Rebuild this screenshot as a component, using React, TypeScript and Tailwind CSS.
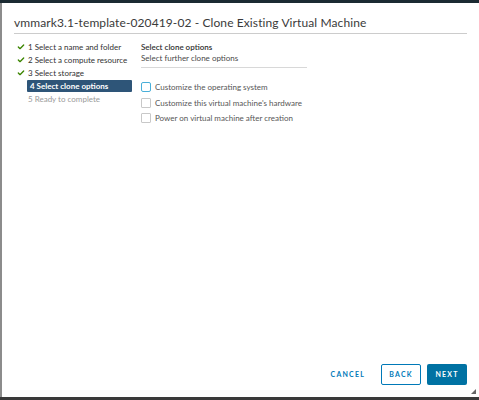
import { Check } from "lucide-react";

const steps = [
  { label: "1 Select a name and folder", done: true },
  { label: "2 Select a compute resource", done: true },
  { label: "3 Select storage", done: true },
  { label: "4 Select clone options", active: true },
  { label: "5 Ready to complete", pending: true },
];

const options = [
  "Customize the operating system",
  "Customize this virtual machine's hardware",
  "Power on virtual machine after creation",
];

export default function App() {
  return (
    <div
      className="h-[400px] w-[479px] overflow-hidden bg-[#1b2a32] pt-[3px]"
      style={{ fontFamily: "Lato, 'Open Sans', sans-serif" }}
    >
      <div className="relative flex h-[394px] flex-col border-l-2 border-[#8c8c8c] bg-white">
        <div className="mx-[12px] mt-[12px] border-b border-[#cccccc] pb-[2px]">
          <h1 className="text-[12px] leading-[16px] tracking-[0.1px] text-[#3a3a3a]">
            vmmark3.1-template-020419-02 - Clone Existing Virtual Machine
          </h1>
        </div>

        <div className="flex flex-1 pt-[6px]">
          <ul className="w-[139px] pl-[13px]">
            {steps.map((s) => (
              <li key={s.label} className="flex h-[13px] items-center">
                <span className="flex w-[12px] justify-center">
                  {s.done && <Check className="h-[8px] w-[8px] text-[#3c8500]" strokeWidth={4} />}
                </span>
                <span
                  className={
                    s.active
                      ? "flex h-[12px] w-[105px] items-center rounded-[1px] bg-[#2e5578] pl-[3px] text-[8px] font-bold text-white"
                      : s.pending
                        ? "pl-[1px] text-[8px] text-[#9a9a9a]"
                        : "pl-[1px] text-[8px] text-[#313131]"
                  }
                >
                  {s.label}
                </span>
              </li>
            ))}
          </ul>

          <div className="flex flex-col">
            <div className="w-[166px] border-b border-[#d8d8d8] pb-[3px] pt-[2px]">
              <div className="text-[8px] font-semibold leading-[11px] text-[#313131]">Select clone options</div>
              <div className="text-[8px] leading-[11px] text-[#4a4a4a]">Select further clone options</div>
            </div>
            <div className="mt-[13px] flex flex-col gap-[3.5px]">
              {options.map((o, i) => (
                <label key={o} className="flex h-[12px] items-center gap-[4px]">
                  <span
                    className={
                      i === 0
                        ? "h-[10px] w-[10px] rounded-[2px] border border-[#49afd9]"
                        : "h-[10px] w-[10px] rounded-[1px] border border-[#c8c8c8]"
                    }
                  />
                  <span className="text-[8px] text-[#565656]">{o}</span>
                </label>
              ))}
            </div>
          </div>
        </div>

        <div className="flex items-center justify-end gap-[6px] pb-[12px] pr-[12px]">
          <button className="h-[20px] px-[10px] text-[7px] font-bold tracking-[1.2px] text-[#0079b8]">CANCEL</button>
          <button className="h-[21px] w-[40px] rounded-[2px] border border-[#0079b8] text-[7px] font-bold tracking-[1.2px] text-[#0079b8]">
            BACK
          </button>
          <button className="h-[21px] w-[40px] rounded-[2px] bg-[#0072a3] text-[7px] font-bold tracking-[1.2px] text-white">
            NEXT
          </button>
        </div>

        <svg className="absolute bottom-[3px] right-[3px]" width="5" height="5" viewBox="0 0 5 5">
          <path d="M5 0 L5 5 L0 5 Z" fill="#666" />
        </svg>
      </div>
      <div className="h-[3px] bg-[#3a3a3a]" />
    </div>
  );
}
